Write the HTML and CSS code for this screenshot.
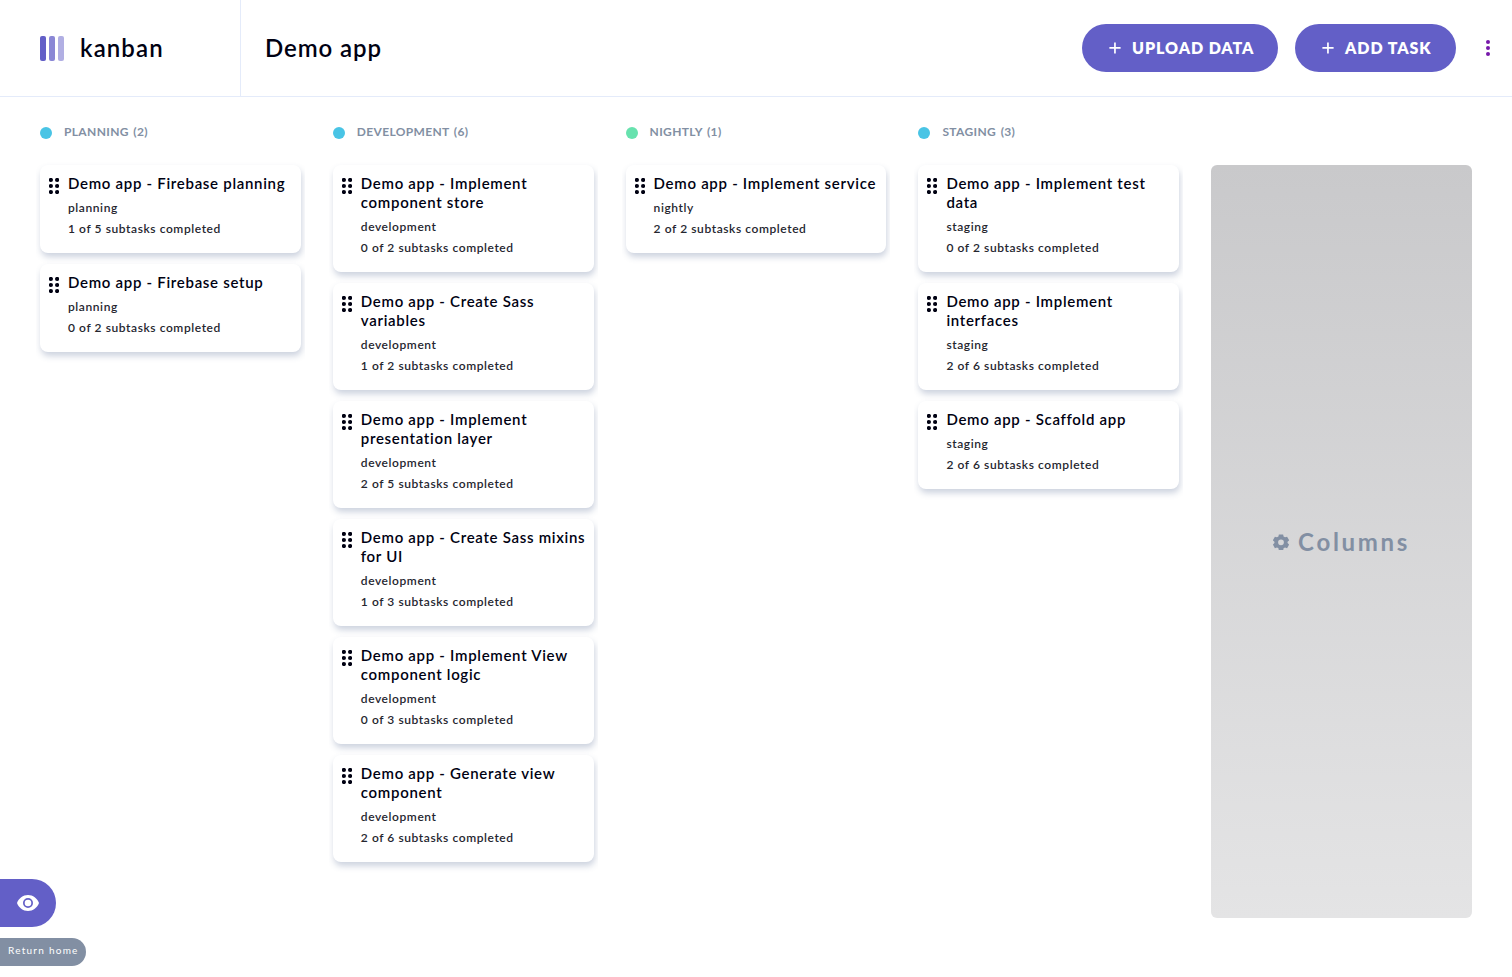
FILE: index.html
```
<!DOCTYPE html>
<html lang="en">
<head>
<meta charset="utf-8">
<title>kanban</title>
<link rel="stylesheet" href="styles.css">
</head>
<body>
<svg class="defs" aria-hidden="true">
  <symbol id="grip" viewBox="0 0 10 16"><circle cx="1.900" cy="2" r="2.100"/><circle cx="8.100" cy="2" r="2.100"/><circle cx="1.900" cy="8" r="2.100"/><circle cx="8.100" cy="8" r="2.100"/><circle cx="1.900" cy="14" r="2.100"/><circle cx="8.100" cy="14" r="2.100"/></symbol>
  <symbol id="plus" viewBox="0 0 12 12"><path d="M5.1 .4h1.7v4.7h4.8v1.7H6.8v4.8H5.1V6.8H.4V5.1h4.7z"/></symbol>
</svg>
<header class="header">
  <div class="brand">
    <svg class="logo" width="24" height="25"><g fill="#635fc7"><rect width="6" height="25" rx="2"/><rect x="9" width="6" height="25" rx="2" opacity=".75"/><rect x="18" width="6" height="25" rx="2" opacity=".5"/></g></svg>
    <span class="brand-name">kanban</span>
  </div>
  <h1 class="board-title">Demo app</h1>
  <div class="actions">
    <button class="button upload"><svg class="plus"><use href="#plus"/></svg><span>UPLOAD DATA</span></button>
    <button class="button add"><svg class="plus"><use href="#plus"/></svg><span>ADD TASK</span></button>
    <svg class="more" width="4" height="16"><circle cx="2" cy="2" r="2"/><circle cx="2" cy="8" r="2"/><circle cx="2" cy="14" r="2"/></svg>
  </div>
</header>
<main class="board">
  <section class="column">
    <h2 class="column-title"><i class="dot"></i><span class="label">PLANNING (2)</span></h2>
    <div class="cards">
      <article class="card"><svg class="grip"><use href="#grip"/></svg><div><h3>Demo app - Firebase planning</h3><p>planning</p><p>1 of 5 subtasks completed</p></div></article>
      <article class="card"><svg class="grip"><use href="#grip"/></svg><div><h3>Demo app - Firebase setup</h3><p>planning</p><p>0 of 2 subtasks completed</p></div></article>
    </div>
  </section>
  <section class="column">
    <h2 class="column-title"><i class="dot"></i><span class="label">DEVELOPMENT (6)</span></h2>
    <div class="cards">
      <article class="card"><svg class="grip"><use href="#grip"/></svg><div><h3>Demo app - Implement<br>component store</h3><p>development</p><p>0 of 2 subtasks completed</p></div></article>
      <article class="card"><svg class="grip"><use href="#grip"/></svg><div><h3>Demo app - Create Sass<br>variables</h3><p>development</p><p>1 of 2 subtasks completed</p></div></article>
      <article class="card"><svg class="grip"><use href="#grip"/></svg><div><h3>Demo app - Implement<br>presentation layer</h3><p>development</p><p>2 of 5 subtasks completed</p></div></article>
      <article class="card"><svg class="grip"><use href="#grip"/></svg><div><h3>Demo app - Create Sass mixins<br>for UI</h3><p>development</p><p>1 of 3 subtasks completed</p></div></article>
      <article class="card"><svg class="grip"><use href="#grip"/></svg><div><h3>Demo app - Implement View<br>component logic</h3><p>development</p><p>0 of 3 subtasks completed</p></div></article>
      <article class="card"><svg class="grip"><use href="#grip"/></svg><div><h3>Demo app - Generate view<br>component</h3><p>development</p><p>2 of 6 subtasks completed</p></div></article>
    </div>
  </section>
  <section class="column">
    <h2 class="column-title"><i class="dot green"></i><span class="label">NIGHTLY (1)</span></h2>
    <div class="cards">
      <article class="card"><svg class="grip"><use href="#grip"/></svg><div><h3>Demo app - Implement service</h3><p>nightly</p><p>2 of 2 subtasks completed</p></div></article>
    </div>
  </section>
  <section class="column">
    <h2 class="column-title"><i class="dot"></i><span class="label">STAGING (3)</span></h2>
    <div class="cards">
      <article class="card"><svg class="grip"><use href="#grip"/></svg><div><h3>Demo app - Implement test<br>data</h3><p>staging</p><p>0 of 2 subtasks completed</p></div></article>
      <article class="card"><svg class="grip"><use href="#grip"/></svg><div><h3>Demo app - Implement<br>interfaces</h3><p>staging</p><p>2 of 6 subtasks completed</p></div></article>
      <article class="card"><svg class="grip"><use href="#grip"/></svg><div><h3>Demo app - Scaffold app</h3><p>staging</p><p>2 of 6 subtasks completed</p></div></article>
    </div>
  </section>
  <button class="new-column">
    <svg class="gear" viewBox="2 2 20 20"><path fill-rule="evenodd" d="M9.300 2.500h5.400l.5 2.700 1.800 1 2.600-.9 2.600 4.500-2 1.800v1.800l2 1.800-2.600 4.500-2.600-.9-1.800 1-.5 2.700H9.300l-.5-2.700-1.800-1-2.600.9-2.600-4.500 2-1.800v-1.800l-2-1.800 2.600-4.500 2.600.9 1.800-1zM12 16a3.600 3.600 0 1 0 0-7.200 3.600 3.600 0 0 0 0 7.200z"/></svg>
    <span>Columns</span>
  </button>
</main>
<aside class="dock">
  <button class="show"><svg width="22" height="16" viewBox="0 0 22 16"><path fill="#fff" fill-rule="evenodd" d="M11 0C6 0 1.7 3.3 0 8c1.7 4.7 6 8 11 8s9.300-3.300 11-8c-1.700-4.700-6-8-11-8zm0 13a5 5 0 1 1 0-10 5 5 0 0 1 0 10zm0-1.700a3.300 3.300 0 1 0 0-6.600 3.300 3.300 0 0 0 0 6.600z"/></svg></button>
  <a class="home">Return home</a>
</aside>
</body>
</html>
```
FILE: styles.css
```
* { box-sizing: border-box; margin: 0; padding: 0; }
body { height: 977px; overflow: hidden; background: #fff; color: #000112; font-family: Lato, "Open Sans", sans-serif; }
button { border: 0; font: inherit; }
.defs { position: absolute; width: 0; height: 0; }
.header { display: flex; height: 97px; border-bottom: 1px solid #e4ebfa; }
.brand { display: flex; align-items: center; gap: 16px; width: 241px; padding-left: 40px; border-right: 1px solid #e4ebfa; }
.brand-name, .board-title { font-size: 24px; font-weight: 600; line-height: 32px; }
.brand-name { letter-spacing: 1.1px; }
.board-title { align-self: center; margin-left: 24px; letter-spacing: .92px; }
.actions { display: flex; align-items: center; margin-left: auto; padding-right: 22px; }
.button { display: flex; align-items: center; height: 48px; gap: 11px; padding-left: 27px; border-radius: 24px; background: #635fc7; color: #fff; font-size: 16px; font-weight: 800; letter-spacing: .93px; white-space: nowrap; }
.button span { padding-bottom: 2px; }
.upload { width: 196px; margin-right: 17px; }
.add { width: 161px; margin-right: 30px; }
.plus { width: 12px; height: 12px; fill: #fff; }
.more { fill: #7719aa; }
.board { display: grid; grid-template-columns: repeat(5, minmax(0, 1fr)); gap: 32px; height: 821px; padding: 24px 40px 0; }
.column { margin: 0 -4px; padding: 0 4px; overflow: hidden; }
.column-title { display: flex; align-items: center; height: 24px; gap: 12px; color: #828fa3; font-size: 12px; font-weight: 700; white-space: nowrap; }
.dot { width: 12px; height: 12px; border-radius: 50%; background: #49c4e5; }
.green { background: #67e2ae; }
.label { line-height: 20px; padding-bottom: 2px; letter-spacing: .35px; word-spacing: 1.300px; }
.cards { display: flex; flex-direction: column; gap: 11px; padding: 20px 0 10px; }
.card { display: flex; gap: 9px; padding: 9px 0 14px 9px; border-radius: 8px; background: #fff; box-shadow: 1px 4px 6px rgba(54, 78, 126, .25); white-space: nowrap; }
.grip { flex: none; width: 10px; height: 16px; margin-top: 4px; fill: #000112; }
.card h3 { margin-bottom: 4px; font-size: 15px; font-weight: 600; line-height: 19px; letter-spacing: .7px; }
.card p { color: #25262f; font-size: 12px; font-weight: 600; line-height: 21px; letter-spacing: .58px; }
.new-column { display: flex; align-items: center; justify-content: center; gap: 9px; margin-top: 44px; border-radius: 6px; background: linear-gradient(#c9c9cb, #e4e4e5); color: #828fa3; font-size: 24px; font-weight: 700; letter-spacing: 2.7px; }
.gear { width: 16px; height: 16px; fill: #828fa3; }
.dock { position: absolute; left: 0; top: 879px; display: flex; flex-direction: column; align-items: flex-start; gap: 11px; }
.show { display: flex; align-items: center; justify-content: flex-end; width: 56px; height: 48px; padding-right: 17px; border-radius: 0 24px 24px 0; background: #635fc7; }
.home { width: 86px; height: 28px; padding-left: 8px; border-radius: 0 14px 14px 0; background: #828fa3; color: #fff; font-size: 10px; line-height: 25px; letter-spacing: 1.25px; white-space: nowrap; }
```
